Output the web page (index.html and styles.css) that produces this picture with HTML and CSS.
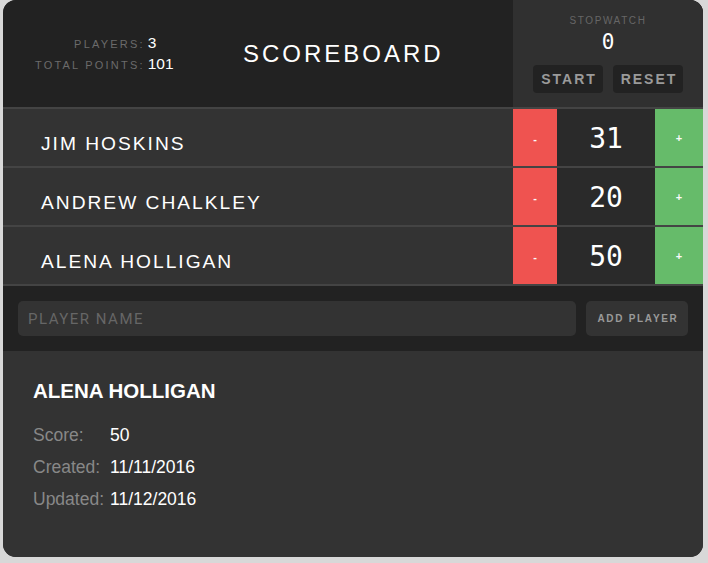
FILE: index.html
```html
<!DOCTYPE html>
<html lang="en">
<head>
<meta charset="utf-8">
<title>Scoreboard</title>
<link rel="stylesheet" href="styles.css">
</head>
<body>
<div class="scoreboard">
  <header class="header">
    <div class="stats">
      <span class="stat-label">Players:</span><span class="stat-value">3</span>
      <span class="stat-label">Total Points:</span><span class="stat-value">101</span>
    </div>
    <h1 class="title">Scoreboard</h1>
    <div class="stopwatch">
      <div class="sw-label">Stopwatch</div>
      <div class="sw-time">0</div>
      <div class="sw-buttons">
        <button class="sw-btn">Start</button>
        <button class="sw-btn">Reset</button>
      </div>
    </div>
  </header>

  <div class="players">
    <div class="player">
      <div class="player-name">Jim Hoskins</div>
      <div class="counter">
        <button class="counter-action decrement">-</button>
        <div class="counter-score">31</div>
        <button class="counter-action increment">+</button>
      </div>
    </div>
    <div class="player">
      <div class="player-name">Andrew Chalkley</div>
      <div class="counter">
        <button class="counter-action decrement">-</button>
        <div class="counter-score">20</div>
        <button class="counter-action increment">+</button>
      </div>
    </div>
    <div class="player">
      <div class="player-name">Alena Holligan</div>
      <div class="counter">
        <button class="counter-action decrement">-</button>
        <div class="counter-score">50</div>
        <button class="counter-action increment">+</button>
      </div>
    </div>
  </div>

  <form class="add-player-form">
    <input class="name-input" type="text" placeholder="Player Name">
    <button class="add-btn" type="button">Add Player</button>
  </form>

  <section class="details">
    <h2 class="details-name">ALENA HOLLIGAN</h2>
    <div class="details-list">
      <span class="d-label">Score:</span><span class="d-value">50</span>
      <span class="d-label">Created:</span><span class="d-value">11/11/2016</span>
      <span class="d-label">Updated:</span><span class="d-value">11/12/2016</span>
    </div>
  </section>
</div>
</body>
</html>
```

FILE: styles.css
```css
* { box-sizing: border-box; }

body {
  margin: 0 0 0 3px;
  background: #d8d8d8;
  font-family: "Liberation Sans", Arial, sans-serif;
  color: #fafafa;
}

.scoreboard {
  width: 700px;
  background: #333;
  border-radius: 13px;
  overflow: hidden;
}

/* header */
.header {
  display: flex;
  height: 109px;
  background: #222;
  border-bottom: 2px solid #444;
}

.stats {
  display: grid;
  grid-template-columns: auto auto;
  column-gap: 3px;
  row-gap: 3px;
  align-content: center;
  align-items: baseline;
  padding-left: 32px;
  padding-bottom: 1px;
}

.stat-label {
  text-align: right;
  text-transform: uppercase;
  font-size: 11px;
  letter-spacing: 2.2px;
  color: #6b6b6b;
}

.stat-value {
  font-size: 15.5px;
  color: #fff;
}

.title {
  flex: 1;
  margin: 0;
  display: flex;
  align-items: center;
  justify-content: center;
  font-size: 24px;
  font-weight: normal;
  letter-spacing: 3px;
  text-transform: uppercase;
  color: #fff;
}

.stopwatch {
  width: 190px;
  background: #303030;
  display: flex;
  flex-direction: column;
  align-items: center;
  padding-top: 15px;
}

.sw-label {
  font-size: 10px;
  letter-spacing: 1.6px;
  text-transform: uppercase;
  color: #666;
  line-height: 11px;
}

.sw-time {
  font-family: "DejaVu Sans Mono", monospace;
  font-size: 21px;
  line-height: 24px;
  margin-top: 4px;
  color: #fff;
}

.sw-buttons {
  display: flex;
  gap: 10px;
  margin-top: 11px;
}

.sw-btn {
  width: 70px;
  height: 28px;
  border: none;
  border-radius: 4px;
  background: #222;
  color: #9a9a9a;
  font-family: "Liberation Sans", Arial, sans-serif;
  font-weight: bold;
  font-size: 14px;
  letter-spacing: 2px;
  text-transform: uppercase;
  padding: 0 0 0 2px;
}

/* players */
.player {
  display: flex;
  height: 59px;
  border-bottom: 2px solid #444;
}

.player-name {
  flex: 1;
  display: flex;
  align-items: center;
  padding: 12px 0 0 38px;
  font-size: 19.2px;
  letter-spacing: 2px;
  text-transform: uppercase;
  color: #fff;
}

.counter {
  display: flex;
  width: 190px;
}

.counter-action {
  border: none;
  padding: 0;
  color: #fafafa;
  font-family: "Liberation Sans", Arial, sans-serif;
  font-weight: bold;
  font-size: 11px;
}

.decrement {
  width: 44px;
  background: #ef5350;
  padding-top: 3px;
}

.increment {
  width: 48px;
  background: #66bb6a;
}

.counter-score {
  width: 98px;
  background: #2a2a2a;
  display: flex;
  align-items: center;
  justify-content: center;
  font-family: "DejaVu Sans Mono", monospace;
  font-size: 28px;
  color: #fff;
  padding-top: 2px;
}

/* add player form */
.add-player-form {
  display: flex;
  gap: 10px;
  margin: 0;
  padding: 15px 15px;
  background: #222;
}

.name-input {
  flex: 1;
  height: 35px;
  border: none;
  border-radius: 5px;
  background: #333;
  padding: 0 10px;
  font-family: Roboto, "Liberation Sans", sans-serif;
  font-size: 15px;
  letter-spacing: 1.5px;
  color: #fff;
  outline: none;
}

.name-input::placeholder {
  color: #666;
  text-transform: uppercase;
}

.add-btn {
  width: 102px;
  height: 35px;
  border: none;
  border-radius: 5px;
  background: #333;
  color: #9a9a9a;
  font-family: "Liberation Sans", Arial, sans-serif;
  font-weight: bold;
  font-size: 10px;
  letter-spacing: 1.7px;
  text-transform: uppercase;
  padding: 0 0 0 2px;
}

/* details */
.details {
  padding: 28px 30px 42px;
  background: #333;
}

.details-name {
  margin: 0 0 16px;
  font-size: 20.5px;
  line-height: 24px;
  font-weight: bold;
  color: #fff;
}

.details-list {
  display: grid;
  grid-template-columns: auto 1fr;
  column-gap: 6px;
  font-size: 17.5px;
  line-height: 32px;
}

.d-label { color: #888; }
.d-value { color: #fff; }
```
